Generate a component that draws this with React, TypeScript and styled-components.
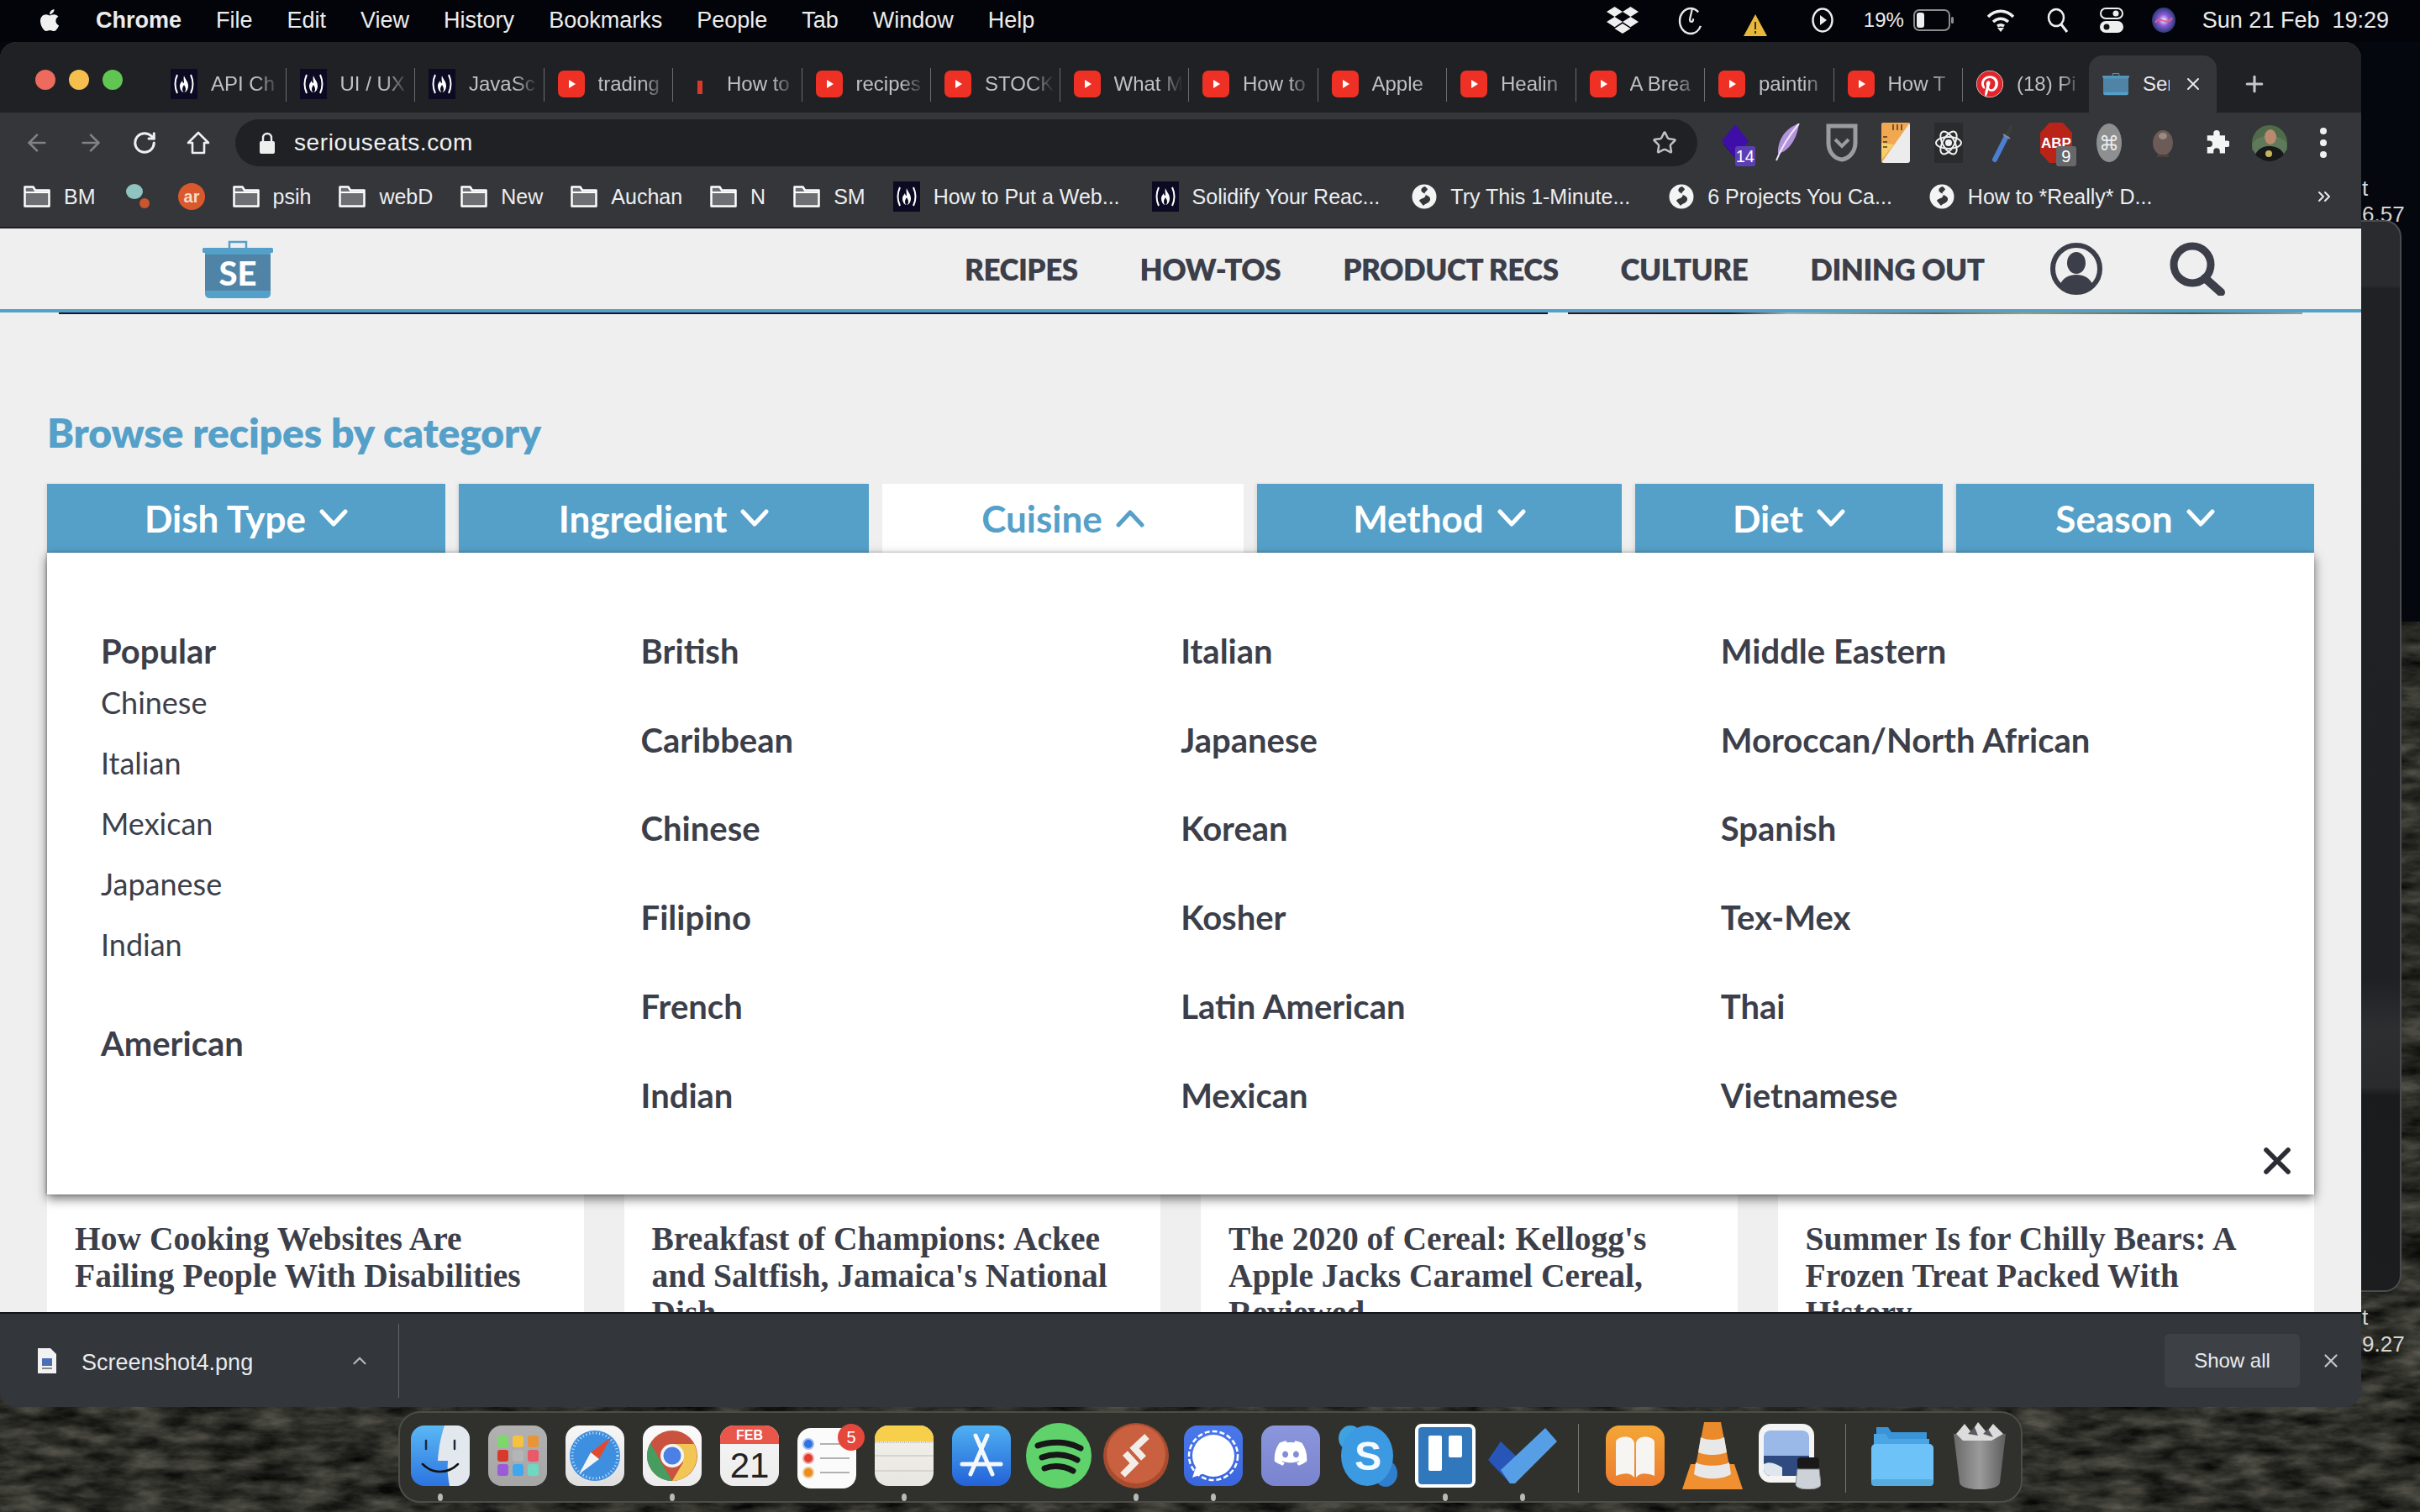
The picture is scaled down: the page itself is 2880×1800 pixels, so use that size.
import React from "react";
import styled, { createGlobalStyle } from "styled-components";
import { ArrowLeft, ArrowRight, RotateCw, Star, ChevronUp, X, Plus, ChevronsRight } from "lucide-react";
import { FaApple, FaDropbox, FaPinterest, FaDiscord } from "react-icons/fa";

const BLUE = "#55a0c9";
const INK = "#3c3f4a";
const SITE_FONT = `Lato, "Open Sans", sans-serif`;
const UI_FONT = `"Liberation Sans", Arial, sans-serif`;

const GlobalStyle = createGlobalStyle`
  html, body { margin: 0; padding: 0; background: #05070f; }
  * { box-sizing: border-box; }
`;

const Desktop = styled.div`
  position: relative;
  width: 2880px;
  height: 1800px;
  overflow: hidden;
  display: flex;
  flex-direction: column;
  background: #05070f;
  font-family: ${UI_FONT};
`;

const Wallpaper = styled.svg`
  position: absolute;
  left: 0;
  top: 0;
  width: 2880px;
  height: 1800px;
`;

const MenuBar = styled.div`
  position: relative;
  height: 50px;
  display: flex;
  align-items: center;
  padding: 0 37px 2px 44px;
  color: #ececec;
  font-size: 27px;
  background: #03040a;
`;

const MenuItems = styled.div`
  display: flex;
  align-items: center;
  gap: 41px;
  margin-left: 40px;
`;

const MenuItem = styled.span<{ $bold?: boolean }>`
  font-weight: ${(p) => (p.$bold ? 700 : 400)};
`;

const StatusArea = styled.div`
  margin-left: auto;
  display: flex;
  align-items: center;
`;

const StatusSlot = styled.span<{ $ml: number; $size?: number }>`
  display: inline-flex;
  align-items: center;
  margin-left: ${(p) => p.$ml}px;
  font-size: ${(p) => p.$size ?? 27}px;
  white-space: nowrap;
`;

const WindowRow = styled.div`
  position: relative;
  display: flex;
  height: 1625px;
`;

const BrowserWindow = styled.div`
  position: relative;
  z-index: 2;
  width: 2810px;
  height: 100%;
  display: flex;
  flex-direction: column;
  overflow: hidden;
  border-radius: 20px;
  box-shadow: inset 0 2px 0 #55585c;
`;

const BackWindow = styled.div`
  width: 48px;
  height: 1276px;
  margin-top: 212px;
  border: 2px solid #4a4b4d;
  border-left: none;
  border-radius: 0 20px 20px 0;
  background: linear-gradient(#2a2b2e 0, #2a2b2e 76px, #202124 80px, #1f2023 900px, #2d2e30 960px, #2a2b2d 1030px, #1a1b1d 1040px, #1c1d1f 100%);
`;

const DesktopLabel = styled.span<{ $top: number }>`
  position: absolute;
  left: 2811px;
  top: ${(p) => p.$top}px;
  color: #d6d6d6;
  font-size: 26px;
  line-height: 30px;
`;

const TabStrip = styled.div`
  height: 84px;
  flex: none;
  display: flex;
  align-items: flex-end;
  padding-left: 187px;
  background: #202124;
  position: relative;
`;

const TrafficLights = styled.div`
  position: absolute;
  left: 42px;
  top: 31px;
  display: flex;
  gap: 16px;
  margin-top: 2px;
`;

const Light = styled.span<{ $color: string }>`
  width: 24px;
  height: 24px;
  border-radius: 50%;
  background: ${(p) => p.$color};
`;

const TabItem = styled.div<{ $last?: boolean }>`
  width: ${(p) => (p.$last ? 150 : 153.5)}px;
  height: 68px;
  flex: none;
  display: flex;
  align-items: center;
  gap: 16px;
  padding: 0 0 0 16px;
  position: relative;
  color: #bdc1c6;
  font-size: 24px;
  &::after {
    content: "";
    position: absolute;
    right: 0;
    top: 15px;
    height: 40px;
    width: 1px;
    background: ${(p) => (p.$last ? "transparent" : "#6a6c70")};
  }
`;

const TabLabel = styled.span`
  flex: 1;
  overflow: hidden;
  white-space: nowrap;
  -webkit-mask-image: linear-gradient(90deg, #000 60%, transparent 92%);
  mask-image: linear-gradient(90deg, #000 60%, transparent 92%);
  padding-right: 12px;
`;

const ActiveTab = styled.div`
  width: 152px;
  height: 68px;
  flex: none;
  display: flex;
  align-items: center;
  padding: 0 0 0 16px;
  gap: 16px;
  border-radius: 16px 16px 0 0;
  background: #35363a;
  color: #e8eaed;
  font-size: 24px;
`;

const ActiveLabel = styled.span`
  width: 32px;
  overflow: hidden;
  white-space: nowrap;
`;

const NewTab = styled.span`
  margin: 0 0 14px 30px;
  height: 40px;
  display: flex;
  align-items: center;
  color: #c4c7cb;
`;

const Toolbar = styled.div`
  height: 84px;
  flex: none;
  display: flex;
  align-items: flex-start;
  padding: 8px 13px 0 12px;
  background: #35363a;
`;

const NavButton = styled.span<{ $dim?: boolean }>`
  width: 64px;
  height: 56px;
  display: flex;
  align-items: center;
  justify-content: center;
  color: ${(p) => (p.$dim ? "#7f8286" : "#f0f0f0")};
`;

const Omnibox = styled.div`
  flex: 1;
  height: 56px;
  margin-left: 12px;
  padding: 0 24px 0 28px;
  border-radius: 28px;
  background: #202124;
  display: flex;
  align-items: center;
  color: #f0f1f2;
  font-size: 28px;
  letter-spacing: 0.6px;
`;

const OmniText = styled.span`
  margin-left: 22px;
  flex: 1;
`;

const Extensions = styled.div`
  margin-left: 13px;
  display: flex;
`;

const ExtButton = styled.span`
  position: relative;
  width: 63.7px;
  height: 56px;
  display: flex;
  align-items: center;
  justify-content: center;
`;

const ExtBadge = styled.span<{ $bg: string }>`
  position: absolute;
  left: 32px;
  top: 32px;
  min-width: 24px;
  height: 24px;
  border-radius: 3px;
  background: ${(p) => p.$bg};
  color: #fff;
  font-size: 20px;
  line-height: 24px;
  text-align: center;
`;

const BookmarkBar = styled.div`
  height: 54px;
  flex: none;
  display: flex;
  align-items: flex-start;
  gap: 33px;
  padding: 0 32px 0 28px;
  background: #35363a;
  border-bottom: 2px solid #1f2023;
`;

const Bookmark = styled.span<{ $ml?: number }>`
  display: flex;
  align-items: center;
  height: 32px;
  gap: 16px;
  margin-left: ${(p) => p.$ml ?? 0}px;
  color: #eceef0;
  font-size: 25px;
  white-space: nowrap;
`;

const BookmarkMore = styled.span`
  margin-left: auto;
  height: 32px;
  display: flex;
  align-items: center;
  color: #e8e8e8;
`;

const Page = styled.div`
  flex: 1;
  min-height: 0;
  overflow: hidden;
  background: #efefef;
  font-family: ${SITE_FONT};
`;

const SiteHeader = styled.header`
  height: 100px;
  display: flex;
  align-items: center;
  padding-left: 241px;
  border-bottom: 4px solid ${BLUE};
`;

const NavLinks = styled.nav`
  display: flex;
  align-items: center;
  gap: 74px;
  margin-left: 823px;
`;

const NavLink = styled.a`
  color: ${INK};
  font-size: 35px;
  font-weight: 800;
  letter-spacing: -0.5px;
  white-space: nowrap;
`;

const HeaderIcon = styled.span<{ $ml: number }>`
  display: flex;
  margin-left: ${(p) => p.$ml}px;
`;

const HeroStrip = styled.div`
  height: 2px;
  display: flex;
  padding-left: 70px;
`;

const HeroPiece = styled.span<{ $w: number; $bg: string; $ml?: number }>`
  width: ${(p) => p.$w}px;
  margin-left: ${(p) => p.$ml ?? 0}px;
  background: ${(p) => p.$bg};
`;

const Browse = styled.main`
  padding: 0 56px;
`;

const BrowseTitle = styled.h2`
  margin: 115px 0 35px;
  height: 52px;
  color: ${BLUE};
  font-size: 48px;
  line-height: 52px;
  font-weight: 800;
  letter-spacing: -0.15px;
`;

const CategoryTabs = styled.div`
  display: flex;
  gap: 16px;
  height: 82px;
`;

const CategoryTab = styled.div<{ $w: number; $open?: boolean }>`
  width: ${(p) => p.$w}px;
  display: flex;
  align-items: center;
  justify-content: center;
  gap: 16px;
  background: ${(p) => (p.$open ? "#fff" : BLUE)};
  color: ${(p) => (p.$open ? BLUE : "#fff")};
  font-size: 44px;
  font-weight: 700;
  box-shadow: ${(p) => (p.$open ? "none" : "-2px 0 4px rgba(0,0,0,.08)")};
`;

const Panel = styled.section`
  position: relative;
  z-index: 1;
  height: 764px;
  padding: 64px 64px 0;
  display: grid;
  grid-template-columns: repeat(4, 642.6px);
  background: #fff;
  box-shadow: 0 5px 12px rgba(0, 0, 0, 0.55), -1px 0 3px rgba(0, 0, 0, 0.25);
`;

const PanelColumn = styled.div`
  display: flex;
  flex-direction: column;
`;

const CuisineLink = styled.a`
  height: 105.8px;
  display: flex;
  align-items: center;
  color: ${INK};
  font-size: 40px;
  font-weight: 700;
`;

const PopularTitle = styled.a<{ $mt?: number; $pt?: number }>`
  display: block;
  margin-top: ${(p) => p.$mt ?? 0}px;
  padding-top: ${(p) => p.$pt ?? 0}px;
  color: ${INK};
  font-size: 40px;
  line-height: 50px;
  font-weight: 700;
`;

const PopularLink = styled.a`
  height: 72px;
  display: flex;
  align-items: center;
  color: ${INK};
  font-size: 36px;
`;

const PanelClose = styled.span`
  position: absolute;
  right: 18px;
  bottom: 14px;
  display: flex;
  color: #2b2d35;
`;

const Articles = styled.div`
  display: grid;
  grid-template-columns: repeat(4, 638.5px);
  column-gap: 48px;
`;

const ArticleCard = styled.article`
  height: 240px;
  padding: 31px 45px 0 33px;
  background: #fff;
  color: ${INK};
  font-family: "Liberation Serif", serif;
  font-size: 39.5px;
  line-height: 44px;
  font-weight: 700;
`;

const DownloadBar = styled.div`
  height: 113px;
  flex: none;
  display: flex;
  align-items: center;
  padding: 0 0 0 44px;
  background: #33363a;
  border-top: 2px solid #15161a;
  color: #e8eaed;
  font-size: 27px;
`;

const DownloadName = styled.span`
  margin: 6px 0 0 29px;
  width: 318px;
`;

const DownloadDivider = styled.span`
  width: 1px;
  height: 88px;
  margin-left: 33px;
  background: #62656a;
`;

const ShowAll = styled.span`
  margin-left: auto;
  width: 161px;
  height: 64px;
  display: flex;
  align-items: center;
  justify-content: center;
  border-radius: 6px;
  background: #3d4044;
  color: #e8eaed;
  font-size: 24px;
`;

const DownloadClose = styled.span`
  width: 73px;
  display: flex;
  justify-content: center;
  color: #c4c7cb;
`;

const Dock = styled.div`
  position: relative;
  align-self: center;
  width: 1933px;
  height: 109px;
  margin-top: 5px;
  padding: 9px 0 0 2px;
  display: flex;
  border: 2px solid #4d4d48;
  border-radius: 26px;
  background: #30302c;
`;

const DockSlot = styled.div`
  width: 92px;
  flex: none;
  display: flex;
  flex-direction: column;
  align-items: center;
`;

const DockArt = styled.div`
  height: 84px;
  display: flex;
  align-items: center;
  justify-content: center;
`;

const DockDot = styled.span<{ $on?: boolean }>`
  width: 6px;
  height: 9px;
  margin-top: 3px;
  border-radius: 50%;
  background: ${(p) => (p.$on ? "#b9b9b5" : "transparent")};
`;

const DockSeparator = styled.div`
  width: 42px;
  flex: none;
  display: flex;
  justify-content: center;
  padding-top: 4px;
  &::after {
    content: "";
    width: 1px;
    height: 82px;
    background: #77776f;
  }
`;

const Freecodecamp = () => (
  <svg width="32" height="36" viewBox="0 0 32 36">
    <rect width="32" height="36" fill="#0a0a23" />
    <path d="M8 7Q3 18 8 29M24 7Q29 18 24 29" stroke="#fff" strokeWidth="2" fill="none" />
    <path d="M16 8c1 4 5 7 5 12 0 4-2 8-5 8s-5-4-5-8c0-3 2-4 3-6 0 2 1 3 2 3 0-3-1-6 0-9z" fill="#fff" />
    <path d="M16 19c1 2 2 3 2 5s-1 4-2 4-2-2-2-4 1-3 2-5z" fill="#0a0a23" />
  </svg>
);

const Youtube = () => (
  <svg width="32" height="32" viewBox="0 0 32 32">
    <rect width="32" height="32" rx="7" fill="#ee3124" />
    <path d="M13 11l8 5-8 5z" fill="#fff" />
  </svg>
);

const TinyDot = () => (
  <svg width="32" height="32" viewBox="0 0 32 32">
    <rect x="13" y="12" width="6" height="16" fill="#d8392b" />
  </svg>
);

const Pinterest = () => (
  <FaPinterest size={32} color="#e0262c" style={{ background: "#fff", borderRadius: "50%", flex: "none" }} />
);

const PotIcon = ({ width, height, label }: { width: number; height: number; label?: boolean }) => (
  <svg width={width} height={height} viewBox="0 0 84 69">
    <path d="M32 9V2h20v7" fill="none" stroke={BLUE} strokeWidth="2.5" />
    <rect x="0" y="9" width="84" height="6" rx="1.5" fill={BLUE} />
    <path d="M3 14h78v50a5 5 0 0 1-5 5H8a5 5 0 0 1-5-5z" fill={BLUE} />
    <rect x="3" y="17" width="78" height="43" fill="#4f84a6" />
    {label && (
      <text x="42" y="54" textAnchor="middle" fontFamily={SITE_FONT} fontWeight="900" fontSize="40" letterSpacing="0" fill="#fff">
        SE
      </text>
    )}
  </svg>
);

const Folder = () => (
  <svg width="32" height="26" viewBox="0 0 32 26">
    <path d="M1.5 1.5h10l2.5 4h16.5v19h-29z" fill="#6d6f72" stroke="#fff" strokeWidth="2.5" strokeLinejoin="round" />
    <path d="M1.5 8h29" stroke="#fff" strokeWidth="2" />
  </svg>
);

const Globe = () => (
  <svg width="30" height="30" viewBox="0 0 30 30">
    <circle cx="15" cy="15" r="14.5" fill="#f4f4f4" />
    <path d="M16 3c-5 1-6 5-3 7s5 2 3 5-6 2-7 5l5 6c2-3 7-3 8-7s-4-5-6-7 3-4 3-6z" fill="#35363a" />
  </svg>
);

const DotsOrb = () => (
  <svg width="32" height="32" viewBox="0 0 32 32">
    <ellipse cx="13" cy="10" rx="10" ry="9" fill="#8fc4c0" />
    <circle cx="25" cy="24" r="6" fill="#c9562f" />
  </svg>
);

const AirOrb = () => (
  <svg width="32" height="32" viewBox="0 0 32 32">
    <circle cx="16" cy="16" r="16" fill="#d9592c" />
    <text x="16" y="23" textAnchor="middle" fontFamily={UI_FONT} fontWeight="700" fontSize="20" fill="#f5dcc5">
      ar
    </text>
  </svg>
);

const tabs: { icon: React.ReactNode; label: string }[] = [
  { icon: <Freecodecamp />, label: "API Ch" },
  { icon: <Freecodecamp />, label: "UI / UX" },
  { icon: <Freecodecamp />, label: "JavaSc" },
  { icon: <Youtube />, label: "trading" },
  { icon: <TinyDot />, label: "How to" },
  { icon: <Youtube />, label: "recipes" },
  { icon: <Youtube />, label: "STOCK" },
  { icon: <Youtube />, label: "What M" },
  { icon: <Youtube />, label: "How to" },
  { icon: <Youtube />, label: "Apple" },
  { icon: <Youtube />, label: "Healin" },
  { icon: <Youtube />, label: "A Brea" },
  { icon: <Youtube />, label: "paintin" },
  { icon: <Youtube />, label: "How T" },
  { icon: <Pinterest />, label: "(18) Pi" },
];

const bookmarks: { icon: React.ReactNode; label?: string; ml?: number }[] = [
  { icon: <Folder />, label: "BM" },
  { icon: <DotsOrb /> },
  { icon: <AirOrb /> },
  { icon: <Folder />, label: "psih" },
  { icon: <Folder />, label: "webD" },
  { icon: <Folder />, label: "New" },
  { icon: <Folder />, label: "Auchan" },
  { icon: <Folder />, label: "N" },
  { icon: <Folder />, label: "SM" },
  { icon: <Freecodecamp />, label: "How to Put a Web..." },
  { icon: <Freecodecamp />, label: "Solidify Your Reac...", ml: 5 },
  { icon: <Globe />, label: "Try This 1-Minute...", ml: 5 },
  { icon: <Globe />, label: "6 Projects You Ca...", ml: 13 },
  { icon: <Globe />, label: "How to *Really* D...", ml: 11 },
];

const categoryTabs = [
  { label: "Dish Type", w: 474 },
  { label: "Ingredient", w: 488 },
  { label: "Cuisine", w: 430, open: true },
  { label: "Method", w: 434 },
  { label: "Diet", w: 366 },
  { label: "Season", w: 426 },
];

const cuisineColumns = [
  ["British", "Caribbean", "Chinese", "Filipino", "French", "Indian"],
  ["Italian", "Japanese", "Korean", "Kosher", "Latin American", "Mexican"],
  ["Middle Eastern", "Moroccan/North African", "Spanish", "Tex-Mex", "Thai", "Vietnamese"],
];

const popular = ["Chinese", "Italian", "Mexican", "Japanese", "Indian"];

const articles = [
  "How Cooking Websites Are Failing People With Disabilities",
  "Breakfast of Champions: Ackee and Saltfish, Jamaica's National Dish",
  "The 2020 of Cereal: Kellogg's Apple Jacks Caramel Cereal, Reviewed",
  "Summer Is for Chilly Bears: A Frozen Treat Packed With History",
];

const Chevron = ({ up }: { up?: boolean }) => (
  <svg width="34" height="22" viewBox="0 0 34 22">
    <path
      d={up ? "M3 19L17 4l14 15" : "M3 3l14 15L31 3"}
      fill="none"
      stroke="currentColor"
      strokeWidth="5"
      strokeLinecap="round"
      strokeLinejoin="round"
    />
  </svg>
);

const extensions: { art: React.ReactNode; badge?: string; badgeBg?: string }[] = [
  {
    art: (
      <svg width="36" height="44" viewBox="0 0 36 44">
        <path d="M4 24l14 16 10-12z" fill="#1e1468" />
        <path d="M18 0l16 20-16 20L2 20z" fill="#3f0ea8" />
      </svg>
    ),
    badge: "14",
    badgeBg: "#5d3fb5",
  },
  {
    art: (
      <svg width="34" height="46" viewBox="0 0 34 46">
        <path d="M30 0C12 6 4 22 5 36c10-2 22-14 25-36z" fill="#b394dc" />
        <path d="M30 0C20 12 10 26 3 44" fill="none" stroke="#f0e8fa" strokeWidth="2" />
      </svg>
    ),
  },
  {
    art: (
      <svg width="38" height="46" viewBox="0 0 38 46">
        <path d="M3 3h32v20c0 11-8 19-16 20C10 42 3 34 3 23z" fill="none" stroke="#9a9c9e" strokeWidth="5" />
        <path d="M11 19l8 8 8-8" fill="none" stroke="#9a9c9e" strokeWidth="4" />
      </svg>
    ),
  },
  {
    art: (
      <svg width="34" height="48" viewBox="0 0 34 48">
        <rect width="34" height="48" rx="3" fill="#ececec" />
        <path d="M0 3a3 3 0 0 1 3-3h31L0 48z" fill="#f2a751" />
        <path d="M0 44V24L15 26z" fill="#f5cf6c" />
        <path d="M14 2v7M19 2v7M24 2v7M2 17h5M2 23h5M2 29h5" stroke="#4a3a20" strokeWidth="1.5" />
      </svg>
    ),
  },
  {
    art: (
      <svg width="34" height="48" viewBox="0 0 34 48">
        <rect width="34" height="48" fill="#2a2b2d" />
        <g fill="none" stroke="#f2f2f2" strokeWidth="2">
          <ellipse cx="17" cy="24" rx="15" ry="7" />
          <ellipse cx="17" cy="24" rx="15" ry="7" transform="rotate(60 17 24)" />
          <ellipse cx="17" cy="24" rx="15" ry="7" transform="rotate(120 17 24)" />
        </g>
        <circle cx="17" cy="24" r="4" fill="#f2f2f2" />
      </svg>
    ),
  },
  {
    art: (
      <svg width="30" height="48" viewBox="0 0 30 48">
        <path d="M6 44L20 16" stroke="#4d7fd0" strokeWidth="6" strokeLinecap="round" />
        <path d="M20 16l6-12" stroke="#3c3c3c" strokeWidth="5" />
        <path d="M16 14l8 5" stroke="#8c8c8c" strokeWidth="2" />
      </svg>
    ),
  },
  {
    art: (
      <svg width="38" height="48" viewBox="0 0 38 48">
        <path d="M11 0h16l11 12v24L27 48H11L0 36V12z" fill="#b92318" />
        <text x="19" y="30" textAnchor="middle" fontFamily={UI_FONT} fontSize="17" fontWeight="700" fill="#fff">
          ABP
        </text>
      </svg>
    ),
    badge: "9",
    badgeBg: "#66686a",
  },
  {
    art: (
      <svg width="30" height="46" viewBox="0 0 30 46">
        <ellipse cx="15" cy="23" rx="15" ry="23" fill="#8d8f90" />
        <text x="15" y="32" textAnchor="middle" fontFamily='"DejaVu Sans", sans-serif' fontSize="24" fill="#ececec">
          ⌘
        </text>
      </svg>
    ),
  },
  {
    art: (
      <svg width="26" height="36" viewBox="0 0 26 36">
        <ellipse cx="13" cy="18" rx="12" ry="15" fill="#6c5b56" />
        <ellipse cx="13" cy="10" rx="5" ry="4" fill="#9a8a84" />
        <rect x="6" y="32" width="14" height="3" fill="#4a4240" />
      </svg>
    ),
  },
  {
    art: (
      <svg width="30" height="34" viewBox="0 0 24 24">
        <path
          d="M9 3a3 3 0 0 1 6 0v2h5v5h2a3 3 0 0 1 0 6h-2v6h-5v-2a3 3 0 0 0-6 0v2H3v-6h2a3 3 0 0 0 0-6H3V5h6z"
          fill="#f4f4f4"
        />
      </svg>
    ),
  },
  {
    art: (
      <svg width="42" height="44" viewBox="0 0 42 44">
        <circle cx="21" cy="22" r="21" fill="#4f6b4a" />
        <path d="M0 24C6 10 36 10 42 24v6L32 42H10L0 30z" fill="#6e8a6a" opacity=".5" />
        <ellipse cx="22" cy="15" rx="7" ry="9" fill="#b98a70" />
        <path d="M4 36c4-9 12-10 17-10s14 2 17 10c-5 6-12 8-17 8S9 42 4 36z" fill="#17181a" />
        <circle cx="20" cy="35" r="4" fill="#c4b45a" />
      </svg>
    ),
  },
  {
    art: (
      <svg width="8" height="36" viewBox="0 0 8 36">
        <circle cx="4" cy="4" r="4" fill="#f0f0f0" />
        <circle cx="4" cy="18" r="4" fill="#f0f0f0" />
        <circle cx="4" cy="32" r="4" fill="#f0f0f0" />
      </svg>
    ),
  },
];

const Rounded = ({ children, id, top, bottom }: { children?: React.ReactNode; id: string; top: string; bottom: string }) => (
  <svg width="70" height="72" viewBox="0 0 70 72">
    <defs>
      <linearGradient id={id} x1="0" y1="0" x2="0" y2="1">
        <stop offset="0" stopColor={top} />
        <stop offset="1" stopColor={bottom} />
      </linearGradient>
      <clipPath id={`${id}-clip`}>
        <rect width="70" height="72" rx="16" />
      </clipPath>
    </defs>
    <g clipPath={`url(#${id}-clip)`}>
      <rect width="70" height="72" fill={`url(#${id})`} />
      {children}
    </g>
  </svg>
);

const dockLeft: { art: React.ReactNode; on?: boolean }[] = [
  {
    on: true,
    art: (
      <Rounded id="finder" top="#5ab8f5" bottom="#2c74e0">
        <path d="M40 0h30v72H46c-2-10-3-20-2-30H32C33 26 36 12 40 0z" fill="#e3e8ef" />
        <path d="M18 18v10M52 18v10" stroke="#1c2a3c" strokeWidth="2.5" strokeLinecap="round" />
        <path d="M14 46c12 12 30 12 42 0" stroke="#111" strokeWidth="2.5" fill="none" strokeLinecap="round" />
      </Rounded>
    ),
  },
  {
    art: (
      <Rounded id="launch" top="#b1b1b1" bottom="#a6a6a6">
        {["#7cd868", "#f4c23e", "#e8953a", "#d8392c", "#b5b5b8", "#e85a6a", "#9a5bd8", "#3fa7f0", "#6ed8c0"].map((c, i) => (
          <rect key={i} x={11 + (i % 3) * 18} y={12 + Math.floor(i / 3) * 17} width="13" height="14" rx="3" fill={c} />
        ))}
      </Rounded>
    ),
  },
  {
    art: (
      <Rounded id="safari" top="#f7f7f7" bottom="#dedede">
        <circle cx="35" cy="36" r="30" fill="#3f8fe0" />
        <circle cx="35" cy="36" r="27" fill="none" stroke="#d5e8f8" strokeWidth="3" strokeDasharray="1 3" />
        <path d="M54 14L30 32l10 8z" fill="#e2492f" />
        <path d="M16 58l24-18-10-8z" fill="#f4f4f4" />
      </Rounded>
    ),
  },
  {
    on: true,
    art: (
      <Rounded id="chrome" top="#fbfbfb" bottom="#ececec">
        <circle cx="35" cy="36" r="30" fill="#c9533f" />
        <path d="M9 21L22 44 35 66A30 30 0 0 1 9 21z" fill="#469d5f" />
        <path d="M35 22h26A30 30 0 0 1 35 66L48 44z" fill="#f1c654" />
        <circle cx="35" cy="36" r="14" fill="#f4f4f4" />
        <circle cx="35" cy="36" r="10.5" fill="#4d80e4" />
      </Rounded>
    ),
  },
  {
    art: (
      <Rounded id="cal" top="#f6f6f6" bottom="#ececec">
        <rect width="70" height="22" fill="#e8574a" />
        <text x="35" y="17" textAnchor="middle" fontFamily={UI_FONT} fontSize="16" fontWeight="700" fill="#fff">
          FEB
        </text>
        <text x="35" y="62" textAnchor="middle" fontFamily={UI_FONT} fontSize="42" fill="#222">
          21
        </text>
      </Rounded>
    ),
  },
  {
    art: (
      <svg width="82" height="78" viewBox="0 0 82 78" style={{ marginLeft: 12 }}>
        <rect x="0" y="6" width="70" height="72" rx="16" fill="#fbfbfb" />
        <circle cx="13" cy="25" r="6" fill="#2e73e6" stroke="#9db9ee" strokeWidth="2" />
        <circle cx="13" cy="42" r="6" fill="#e23c32" stroke="#f0a8a2" strokeWidth="2" />
        <circle cx="13" cy="59" r="6" fill="#ea8c1e" stroke="#f3c68e" strokeWidth="2" />
        <path d="M27 25h35M27 42h35M27 59h35" stroke="#b0b0b0" strokeWidth="2" />
        <circle cx="64" cy="17" r="16" fill="#e4473c" />
        <text x="64" y="24" textAnchor="middle" fontFamily={UI_FONT} fontSize="20" fill="#fff">
          5
        </text>
      </svg>
    ),
  },
  {
    on: true,
    art: (
      <Rounded id="notes" top="#f2f1ec" bottom="#e8e6e0">
        <rect width="70" height="19" fill="#f8cf4a" />
        <path d="M0 20h70" stroke="#bcbab2" strokeWidth="2" strokeDasharray="1 1.5" />
        <path d="M0 36h70M0 54h70" stroke="#d6d4cc" strokeWidth="2" />
      </Rounded>
    ),
  },
  {
    art: (
      <Rounded id="store" top="#4fb0f2" bottom="#2362d8">
        <path d="M42 12L22 58M28 12l20 46M12 46h46" stroke="#f4f8fc" strokeWidth="5" strokeLinecap="round" fill="none" />
      </Rounded>
    ),
  },
  {
    art: (
      <svg width="78" height="78" viewBox="0 0 78 78">
        <circle cx="39" cy="39" r="39" fill="#5fd26c" />
        <path d="M14 27c16-6 36-5 51 3M19 41c14-5 30-4 42 3M22 54c11-4 24-3 34 3" stroke="#171717" strokeWidth="7" strokeLinecap="round" fill="none" />
      </svg>
    ),
  },
  {
    on: true,
    art: (
      <svg width="78" height="78" viewBox="0 0 78 78">
        <circle cx="39" cy="39" r="39" fill="#a84c30" />
        <circle cx="39" cy="37" r="35" fill="#c9603f" />
        <path d="M52 16L37 30l11 12M26 36l11 12-14 14" fill="none" stroke="#f2ede8" strokeWidth="8" />
      </svg>
    ),
  },
  {
    on: true,
    art: (
      <Rounded id="signal" top="#4a78ea" bottom="#3a66de">
        <circle cx="35" cy="36" r="25" fill="#fff" />
        <circle cx="35" cy="36" r="29" fill="none" stroke="#fff" strokeWidth="2.5" strokeDasharray="6 3" />
        <path d="M14 50l-4 12 14-5z" fill="#fff" />
      </Rounded>
    ),
  },
  {
    art: (
      <Rounded id="discord" top="#8c96dc" bottom="#7a84cf">
        <foreignObject x="14" y="12" width="42" height="48">
          <FaDiscord size={42} color="#fff" />
        </foreignObject>
      </Rounded>
    ),
  },
  {
    art: (
      <svg width="70" height="74" viewBox="0 0 70 74">
        <ellipse cx="14" cy="16" rx="14" ry="15" fill="#3fa2de" />
        <ellipse cx="56" cy="58" rx="14" ry="16" fill="#2f7fce" />
        <ellipse cx="34" cy="37" rx="31" ry="36" fill="#3c9ae2" />
        <text x="35" y="54" textAnchor="middle" fontFamily={UI_FONT} fontSize="48" fontWeight="700" fill="#f6fbff">
          S
        </text>
      </svg>
    ),
  },
  {
    on: true,
    art: (
      <svg width="72" height="76" viewBox="0 0 72 76">
        <rect x="2" y="2" width="68" height="72" rx="6" fill="#3078bb" stroke="#fff" strokeWidth="4" />
        <rect x="16" y="14" width="16" height="42" rx="2" fill="#fff" />
        <rect x="40" y="14" width="16" height="26" rx="2" fill="#fff" />
      </svg>
    ),
  },
  {
    on: true,
    art: (
      <svg width="82" height="66" viewBox="0 0 82 66">
        <path d="M15 16L0 38l26 28 10-30z" fill="#2756b8" />
        <path d="M68 0l14 16-50 50L26 66 15 50z" fill="#569fe6" />
      </svg>
    ),
  },
];

const dockMiddle: React.ReactNode[] = [
  <Rounded id="books" top="#f4a636" bottom="#ec7c30" key="books">
    <path d="M34 62c-4-6-12-6-22-2V20c0-8 22-10 22 2zM36 62c4-6 12-6 22-2V20c0-8-22-10-22 2z" fill="#f7f5f2" />
  </Rounded>,
  <svg width="72" height="80" viewBox="0 0 72 80" key="vlc">
    <path d="M10 50h52l10 30H0z" fill="#f09030" />
    <path d="M26 0h20l12 62c-10 8-34 8-44 0z" fill="#ea8a2c" />
    <path d="M22 18c8 4 20 4 28 0l3 18c-9 4-25 4-34 0zM16 48c10 5 30 5 40 0l2 14c-10 7-34 7-44 0z" fill="#e8e8e8" />
  </svg>,
  <svg width="74" height="80" viewBox="0 0 74 80" key="preview">
    <rect x="0" y="2" width="66" height="70" rx="14" fill="#f4f4f4" />
    <rect x="6" y="10" width="54" height="54" rx="8" fill="#9ab8e8" />
    <path d="M6 40h54v16a8 8 0 0 1-8 8H14a8 8 0 0 1-8-8z" fill="#2f4a80" />
    <path d="M6 50c8-4 14 0 22 4v10H14a8 8 0 0 1-8-8z" fill="#dfe6ee" />
    <rect x="46" y="42" width="26" height="14" rx="4" fill="#191919" />
    <path d="M46 56h26l2 18c0 8-30 8-30 0z" fill="#cdd2d8" stroke="#8a8a8a" />
  </svg>,
];

const dockRight: React.ReactNode[] = [
  <svg width="74" height="72" viewBox="0 0 74 72" key="folder">
    <path d="M6 2h14l4 6h42v14H6z" fill="#3a94d8" />
    <path d="M3 10h14l4 6h48v12H3z" fill="#4ba4e4" />
    <rect x="0" y="22" width="74" height="50" rx="5" fill="#6dc3f7" />
    <rect x="0" y="64" width="74" height="8" rx="4" fill="#55acde" />
  </svg>,
  <svg width="64" height="80" viewBox="0 0 64 80" key="trash">
    <defs>
      <linearGradient id="can" x1="0" x2="1">
        <stop offset="0" stopColor="#6a6a6a" />
        <stop offset=".5" stopColor="#9b9b9b" />
        <stop offset="1" stopColor="#5d5d5d" />
      </linearGradient>
    </defs>
    <path d="M1 14h62l-7 58c-1 11-47 11-48 0z" fill="url(#can)" />
    <path d="M4 14L14 2l8 10 8-12 10 12 8-10 12 12-14 8H12z" fill="#dcdcdc" />
    <path d="M18 14l8-8 4 10zM36 14l6-6 6 10z" fill="#5a5a62" />
  </svg>,
];

const App = () => {
  return (
    <Desktop>
      <GlobalStyle />
      <Wallpaper viewBox="0 0 2880 1800" aria-hidden="true">
        <defs>
          <filter id="rock" x="0" y="0" width="100%" height="100%" colorInterpolationFilters="sRGB">
            <feTurbulence type="fractalNoise" baseFrequency="0.02 0.06" numOctaves="6" seed="8" />
            <feColorMatrix values="0.42 0 0 0 -0.03  0.42 0 0 0 -0.03  0.38 0 0 0 -0.03  0 0 0 0 1" />
          </filter>
        </defs>
        <rect x="0" y="740" width="2880" height="1060" filter="url(#rock)" />
      </Wallpaper>
      <MenuBar>
        <FaApple size={30} color="#f0f0f0" />
        <MenuItems>
          <MenuItem $bold>Chrome</MenuItem>
          {["File", "Edit", "View", "History", "Bookmarks", "People", "Tab", "Window", "Help"].map((m) => (
            <MenuItem key={m}>{m}</MenuItem>
          ))}
        </MenuItems>
        <StatusArea>
          <StatusSlot $ml={0}>
            <FaDropbox size={38} color="#efefef" />
          </StatusSlot>
          <StatusSlot $ml={47}>
            <svg width="30" height="36" viewBox="0 0 30 36">
              <ellipse cx="15" cy="19" rx="13" ry="15" fill="none" stroke="#e8e8e8" strokeWidth="2.4" strokeDasharray="70 12" strokeDashoffset="-6" />
              <path d="M17 4l-3 13c0 4 4 4 4 0" fill="none" stroke="#e8e8e8" strokeWidth="2.2" strokeLinecap="round" />
            </svg>
          </StatusSlot>
          <StatusSlot $ml={47}>
            <svg width="30" height="28" viewBox="0 0 30 28" style={{ marginTop: 12 }}>
              <path d="M15 1l14 26H1z" fill="#e8b93a" />
              <path d="M15 10v9M15 21v3" stroke="#3d3216" strokeWidth="2" />
            </svg>
          </StatusSlot>
          <StatusSlot $ml={52}>
            <svg width="26" height="30" viewBox="0 0 26 30">
              <ellipse cx="13" cy="15" rx="11.5" ry="13.5" fill="none" stroke="#ececec" strokeWidth="2.5" />
              <path d="M10 9l8 6-8 6z" fill="#ececec" />
            </svg>
          </StatusSlot>
          <StatusSlot $ml={36} $size={24}>19%</StatusSlot>
          <StatusSlot $ml={11}>
            <svg width="48" height="26" viewBox="0 0 48 26">
              <rect x="1" y="1" width="42" height="24" rx="6" fill="none" stroke="#8c8c8c" strokeWidth="2" />
              <rect x="4" y="4" width="9" height="18" rx="3" fill="#eee" />
              <rect x="45" y="9" width="3" height="8" rx="1.5" fill="#8c8c8c" />
            </svg>
          </StatusSlot>
          <StatusSlot $ml={39}>
            <svg width="34" height="28" viewBox="0 0 34 28">
              <path d="M2 10c9-9 21-9 30 0M8 16c6-5 12-5 18 0M13 21c3-2 5-2 8 0" fill="none" stroke="#efefef" strokeWidth="3.5" />
              <path d="M17 28l-4-5h8z" fill="#efefef" />
            </svg>
          </StatusSlot>
          <StatusSlot $ml={38}>
            <svg width="26" height="30" viewBox="0 0 26 30">
              <ellipse cx="11" cy="12" rx="9" ry="10" fill="none" stroke="#efefef" strokeWidth="2.5" />
              <path d="M17 20l7 9" stroke="#efefef" strokeWidth="3" />
            </svg>
          </StatusSlot>
          <StatusSlot $ml={37}>
            <svg width="28" height="30" viewBox="0 0 28 30">
              <rect x="1" y="1" width="26" height="12" rx="6" fill="none" stroke="#efefef" strokeWidth="2" />
              <circle cx="19" cy="7" r="3.5" fill="#efefef" />
              <rect x="0" y="16" width="28" height="14" rx="7" fill="#efefef" />
              <circle cx="8" cy="23" r="3.5" fill="#111" />
            </svg>
          </StatusSlot>
          <StatusSlot $ml={34}>
            <svg width="28" height="30" viewBox="0 0 28 30">
              <defs>
                <radialGradient id="siri">
                  <stop offset="0" stopColor="#f4f4ff" />
                  <stop offset=".45" stopColor="#8a5bd6" />
                  <stop offset="1" stopColor="#2a3a78" />
                </radialGradient>
              </defs>
              <ellipse cx="14" cy="15" rx="14" ry="15" fill="url(#siri)" />
              <path d="M4 18c6-10 14 6 20-6" stroke="#e85a8a" strokeWidth="2" fill="none" />
            </svg>
          </StatusSlot>
          <StatusSlot $ml={32}>Sun 21 Feb&nbsp;&nbsp;19:29</StatusSlot>
        </StatusArea>
      </MenuBar>
      <DesktopLabel $top={209}>t</DesktopLabel>
      <DesktopLabel $top={240}>6.57</DesktopLabel>
      <DesktopLabel $top={1553}>t</DesktopLabel>
      <DesktopLabel $top={1585}>9.27</DesktopLabel>
      <WindowRow>
        <BrowserWindow>
          <TabStrip>
            <TrafficLights>
              <Light $color="#ed6a5e" />
              <Light $color="#f5bf4f" />
              <Light $color="#61c554" />
            </TrafficLights>
            {tabs.map((t, i) => (
              <TabItem key={i} $last={i === tabs.length - 1}>
                {t.icon}
                <TabLabel>{t.label}</TabLabel>
              </TabItem>
            ))}
            <ActiveTab>
              <PotIcon width={32} height={36} />
              <ActiveLabel>Ser</ActiveLabel>
              <X size={24} color="#e8eaed" />
            </ActiveTab>
            <NewTab>
              <Plus size={30} strokeWidth={2.5} />
            </NewTab>
          </TabStrip>
          <Toolbar>
            <NavButton $dim>
              <ArrowLeft size={32} />
            </NavButton>
            <NavButton $dim>
              <ArrowRight size={32} />
            </NavButton>
            <NavButton>
              <RotateCw size={30} strokeWidth={2.4} />
            </NavButton>
            <NavButton>
              <svg width="30" height="30" viewBox="0 0 30 30">
                <path d="M15 3L3 15h5v12h14V15h5z" fill="none" stroke="#f0f0f0" strokeWidth="2.6" strokeLinejoin="round" />
              </svg>
            </NavButton>
            <Omnibox>
              <svg width="20" height="26" viewBox="0 0 20 26">
                <path d="M5 12V7a5 5 0 0 1 10 0v5" fill="none" stroke="#eee" strokeWidth="2.4" />
                <rect x="1" y="11" width="18" height="15" rx="2" fill="#eee" />
              </svg>
              <OmniText>seriouseats.com</OmniText>
              <Star size={30} color="#bdc1c6" strokeWidth={2} />
            </Omnibox>
            <Extensions>
              {extensions.map((e, i) => (
                <ExtButton key={i}>
                  {e.art}
                  {e.badge && <ExtBadge $bg={e.badgeBg as string}>{e.badge}</ExtBadge>}
                </ExtButton>
              ))}
            </Extensions>
          </Toolbar>
          <BookmarkBar>
            {bookmarks.map((b, i) => (
              <Bookmark key={i} $ml={b.ml}>
                {b.icon}
                {b.label && <span>{b.label}</span>}
              </Bookmark>
            ))}
            <BookmarkMore>
              <ChevronsRight size={24} />
            </BookmarkMore>
          </BookmarkBar>
          <Page>
            <SiteHeader>
              <PotIcon width={84} height={69} label />
              <NavLinks>
                {["RECIPES", "HOW-TOS", "PRODUCT RECS", "CULTURE", "DINING OUT"].map((n) => (
                  <NavLink key={n}>{n}</NavLink>
                ))}
              </NavLinks>
              <HeaderIcon $ml={79}>
                <svg width="62" height="64" viewBox="0 0 62 64">
                  <circle cx="31" cy="32" r="28" fill="none" stroke={INK} strokeWidth="6" />
                  <ellipse cx="31" cy="25" rx="11" ry="13" fill={INK} />
                  <path d="M11 52c4-10 12-13 20-13s16 3 20 13c-5 6-12 10-20 10s-15-4-20-10z" fill={INK} />
                </svg>
              </HeaderIcon>
              <HeaderIcon $ml={80}>
                <svg width="66" height="64" viewBox="0 0 66 64">
                  <circle cx="27" cy="27" r="22" fill="none" stroke={INK} strokeWidth="9" />
                  <path d="M42 43l19 17" stroke={INK} strokeWidth="10" strokeLinecap="round" />
                </svg>
              </HeaderIcon>
            </SiteHeader>
            <HeroStrip>
              <HeroPiece $w={1772} $bg="#101a2e" />
              <HeroPiece $w={874} $ml={24} $bg="linear-gradient(90deg,#3a1020 0,#2a0a16 22%,#b0b0a8 30%,#6a6248 50%,#a89a60 62%,#55553f 85%,#9aa0a0 100%)" />
            </HeroStrip>
            <Browse>
              <BrowseTitle>Browse recipes by category</BrowseTitle>
              <CategoryTabs>
                {categoryTabs.map((t) => (
                  <CategoryTab key={t.label} $w={t.w} $open={t.open}>
                    {t.label}
                    <Chevron up={t.open} />
                  </CategoryTab>
                ))}
              </CategoryTabs>
              <Panel>
                <PanelColumn>
                  <PopularTitle $pt={28}>Popular</PopularTitle>
                  {popular.map((p) => (
                    <PopularLink key={p}>{p}</PopularLink>
                  ))}
                  <PopularTitle $mt={57}>American</PopularTitle>
                </PanelColumn>
                {cuisineColumns.map((col, i) => (
                  <PanelColumn key={i}>
                    {col.map((c) => (
                      <CuisineLink key={c}>{c}</CuisineLink>
                    ))}
                  </PanelColumn>
                ))}
                <PanelClose>
                  <X size={52} strokeWidth={2.6} />
                </PanelClose>
              </Panel>
              <Articles>
                {articles.map((a) => (
                  <ArticleCard key={a}>{a}</ArticleCard>
                ))}
              </Articles>
            </Browse>
          </Page>
          <DownloadBar>
            <svg width="24" height="30" viewBox="0 0 24 30">
              <path d="M1 0h15l7 7v23H1z" fill="#f2f2f2" />
              <rect x="6" y="12" width="12" height="9" fill="#4a6fb5" />
              <path d="M6 24h12" stroke="#888" strokeWidth="2" />
            </svg>
            <DownloadName>Screenshot4.png</DownloadName>
            <ChevronUp size={26} color="#b4b6ba" />
            <DownloadDivider />
            <ShowAll>Show all</ShowAll>
            <DownloadClose>
              <X size={26} />
            </DownloadClose>
          </DownloadBar>
        </BrowserWindow>
        <BackWindow />
      </WindowRow>
      <Dock>
        {dockLeft.map((d, i) => (
          <DockSlot key={i}>
            <DockArt>{d.art}</DockArt>
            <DockDot $on={d.on} />
          </DockSlot>
        ))}
        <DockSeparator />
        {dockMiddle.map((art, i) => (
          <DockSlot key={i}>
            <DockArt>{art}</DockArt>
            <DockDot />
          </DockSlot>
        ))}
        <DockSeparator />
        {dockRight.map((art, i) => (
          <DockSlot key={i}>
            <DockArt>{art}</DockArt>
            <DockDot />
          </DockSlot>
        ))}
      </Dock>
    </Desktop>
  );
};

export default App;
